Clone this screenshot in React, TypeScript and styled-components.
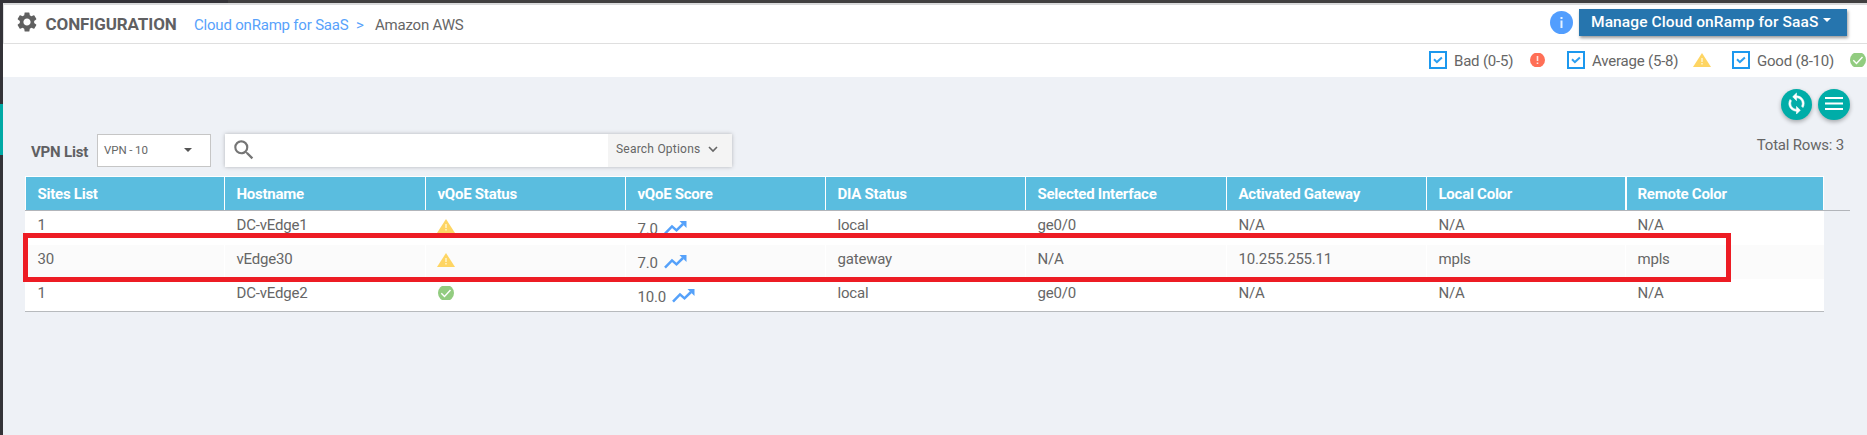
import React from 'react';
import styled, { createGlobalStyle } from 'styled-components';
import { MdSettings, MdSearch } from 'react-icons/md';

const GlobalStyle = createGlobalStyle`
  * { box-sizing: border-box; }
  body {
    margin: 0;
    overflow: hidden;
    background: #eef1f6;
    color: #666;
    font-family: Roboto, "Liberation Sans", sans-serif;
    font-size: 15px;
    line-height: 18px;
    letter-spacing: -0.2px;
  }
  svg { display: block; flex: none; }
`;

const Shell = styled.div`
  display: grid;
  grid-template-columns: 3px 1fr;
  grid-template-rows: 3px 432px;
`;
const TopEdge = styled.div`
  grid-column: 1 / -1;
  background: linear-gradient(90deg, #343338 228px, #403f40 228px);
`;
const Rail = styled.div`
  background: #343338;
  padding-top: 101px;
`;
const RailActive = styled.div`
  height: 51px;
  background: #00a9a5;
`;
const Main = styled.main`
  min-width: 0;
`;

const Header = styled.header`
  height: 41px;
  display: flex;
  align-items: flex-start;
  background: #fff;
  border-top: 2px solid #d9dadb;
  border-left: 1px solid #e0e1e2;
  border-bottom: 1px solid #dfdfdf;
  padding: 4px 20px 0 11px;
`;
const GearIcon = styled(MdSettings)`
  margin-top: 1px;
  color: #606060;
`;
const Title = styled.h1`
  margin: 6px 0 0 6.5px;
  width: 148.5px;
  font-size: 17px;
  line-height: 18px;
  font-weight: 700;
  letter-spacing: -0.1px;
  color: #5f6062;
`;
const Crumb = styled.span<{ $link?: boolean; $width?: number }>`
  margin-top: 7px;
  width: ${p => (p.$width ? `${p.$width}px` : 'auto')};
  white-space: nowrap;
  color: ${p => (p.$link ? '#58a2fb' : '#666')};
`;
const HeaderActions = styled.div`
  display: flex;
  margin-left: auto;
  gap: 6px;
`;
const InfoIcon = styled.svg`
  margin-top: 2px;
`;
const ManageButton = styled.button`
  width: 268px;
  height: 27px;
  display: flex;
  align-items: flex-start;
  gap: 5px;
  padding: 4px 0 0 12px;
  border: 0;
  background: #2675ae;
  color: #fff;
  font: 500 15.5px/18px Roboto, sans-serif;
  letter-spacing: 0.1px;
  white-space: nowrap;
  box-shadow: 1px 2px 3px rgba(0, 0, 0, 0.4);
`;
const Caret = styled.i<{ $color: string }>`
  width: 0;
  height: 0;
  border: 4.5px solid transparent;
  border-top: 4px solid ${p => p.$color};
  border-bottom: 0;
`;
const ManageCaret = styled(Caret)`
  margin-top: 5px;
`;

const Legend = styled.div`
  height: 33px;
  display: flex;
  justify-content: flex-end;
  align-items: flex-start;
  padding: 7px 1px 0 0;
  background: #fff;
`;
const LegendItem = styled.label<{ $width: number }>`
  width: ${p => p.$width}px;
  display: flex;
`;
const LegendText = styled.span<{ $width: number }>`
  width: ${p => p.$width}px;
  margin: 1px 0 0 7px;
  white-space: nowrap;
`;
const Check = styled.span`
  width: 18px;
  height: 18px;
  flex: none;
  border: 2px solid #1c98ee;
  background: #fff;
`;
const LegendIcon = styled.span`
  margin-top: 2px;
`;

const Actions = styled.div`
  display: flex;
  justify-content: flex-end;
  gap: 6px;
  padding: 12px 17px 0 0;
`;
const RoundButton = styled.button<{ $size: number }>`
  width: ${p => p.$size}px;
  height: 31px;
  display: flex;
  align-items: center;
  justify-content: center;
  padding: 0 0 2px;
  border: 0;
  border-radius: 50%;
  color: #fff;
  background: #00ada8;
  box-shadow: 0 2px 4px rgba(0, 0, 0, 0.3);
`;

const Toolbar = styled.div`
  height: 42px;
  margin-top: 14px;
  display: flex;
  align-items: flex-start;
  padding: 0 23px 0 28px;
`;
const VpnLabel = styled.b`
  width: 66px;
  margin-top: 9px;
  white-space: nowrap;
  color: #5f6062;
`;
const Select = styled.div`
  width: 114px;
  height: 33px;
  display: flex;
  justify-content: space-between;
  padding: 6px 18px 0 6px;
  border: 1px solid #c6c6c6;
  background: #fff;
  font-size: 11.5px;
  letter-spacing: -0.1px;
`;
const SelectCaret = styled(Caret)`
  margin-top: 7px;
`;
const SearchBox = styled.div`
  width: 507px;
  height: 33px;
  margin-left: 14px;
  display: flex;
  justify-content: space-between;
  background: #fff;
  box-shadow: 0 0 4px rgba(0, 0, 0, 0.25);
`;
const SearchIcon = styled(MdSearch)`
  margin: 3px 0 0 6px;
  color: #757575;
`;
const SearchOptions = styled.div`
  width: 124px;
  display: flex;
  padding: 6px 0 0 8px;
  gap: 8px;
  background: #f4f4f4;
  font-size: 12px;
  letter-spacing: 0.22px;
`;
const Chevron = styled.svg`
  margin-top: 6px;
`;
const Total = styled.span`
  margin-left: auto;
  margin-top: 2px;
`;

const TableArea = styled.section`
  position: relative;
  width: 1825px;
  margin-left: 22px;
`;
const columns = '199px 201px 200px 200px 200px 201px 200px 199px 199px';
const HeadRow = styled.div`
  display: grid;
  grid-template-columns: ${columns};
  height: 35px;
  border-bottom: 1px solid #b2b5ba;
`;
const HeadCell = styled.div`
  border: 1px solid #fff;
  border-width: 1px 0 0 1px;
  padding: 8px 0 0 11.5px;
  background: #5abddf;
  color: #fff;
  font-weight: 700;
  letter-spacing: -0.25px;
  white-space: nowrap;

  &:last-child {
    border-left-width: 2px;
    border-right-width: 1px;
    padding-left: 10.5px;
  }
`;
const Row = styled.div<{ $alt?: boolean; $last?: boolean }>`
  display: grid;
  grid-template-columns: ${columns};
  width: 1799px;
  height: ${p => (p.$last ? 33 : 34)}px;
  border-bottom: ${p => (p.$last ? '1px solid #b7babd' : '0')};
  background: ${p => (p.$alt ? '#fbfbfb' : '#fff')};
`;
const Cell = styled.div`
  border-left: 1px solid #fff;
  padding: 5px 0 0 11.5px;
  white-space: nowrap;
`;
const StatusCell = styled(Cell)<{ $good: boolean }>`
  padding: ${p => (p.$good ? '7px 0 0 12px' : '8px 0 0 11px')};
`;
const ScoreCell = styled(Cell)`
  display: flex;
  padding-top: 9px;
  gap: 6px;
`;
const Trend = styled.svg`
  margin-top: 1px;
`;
const Highlight = styled.div`
  position: absolute;
  left: -2px;
  top: 57px;
  width: 1708px;
  height: 49px;
  border: 5px solid #ed1c24;
`;

const WarningIcon = () => (
  <svg width="18" height="14" viewBox="0 0 18 14">
    <path d="M9 0L18 14H0Z" fill="#fed563" />
    <path d="M9 5v4M9 10v1.5" stroke="#fff3ca" strokeWidth="1.5" />
  </svg>
);
const GoodIcon = () => (
  <svg width="16" height="14" viewBox="0 0 16 14">
    <circle cx="8" cy="7" r="8" fill="#92cc80" />
    <path d="M3.3 7.2l3.2 3.2 6-6.4" fill="none" stroke="#fff" strokeWidth="1.4" />
  </svg>
);
const BadIcon = () => (
  <svg width="15" height="14" viewBox="0 0 15 14">
    <circle cx="7.5" cy="7" r="7.5" fill="#ff6f56" />
    <path d="M7.5 3v5M7.5 9.5V11" stroke="#ffe4df" strokeWidth="1.6" />
  </svg>
);
const CheckBox = () => (
  <Check>
    <svg width="14" height="14" viewBox="0 0 14 14">
      <path d="M3 6.2l2.9 2.9 5-4.6" fill="none" stroke="#2d9ff0" strokeWidth="2" />
    </svg>
  </Check>
);
const SyncIcon = () => (
  <svg width="23" height="23" viewBox="0 0 24 24" fill="#fff" stroke="#fff" strokeWidth="0.6">
    <path d="M12 4V1L8 5l4 4V6c3.31 0 6 2.69 6 6 0 1.01-.25 1.97-.7 2.8l1.46 1.46C19.54 15.03 20 13.57 20 12c0-4.42-3.58-8-8-8z" />
    <path d="M12 18c-3.31 0-6-2.69-6-6 0-1.01.25-1.97.7-2.8L5.24 7.74C4.46 8.97 4 10.43 4 12c0 4.42 3.58 8 8 8v3l4-4-4-4v3z" />
  </svg>
);
const TrendIcon = () => (
  <Trend width="23" height="14" viewBox="0 0 23 14">
    <path d="M1 12.6L8 5.4L12.5 9.4L19 3" fill="none" stroke="#55a1fa" strokeWidth="2.5" />
    <path d="M15.5 0H22.5V7Z" fill="#55a1fa" />
  </Trend>
);

const headings = ['Sites List', 'Hostname', 'vQoE Status', 'vQoE Score', 'DIA Status', 'Selected Interface', 'Activated Gateway', 'Local Color', 'Remote Color'];
const rows = [
  { site: '1', host: 'DC-vEdge1', good: false, score: '7.0', rest: ['local', 'ge0/0', 'N/A', 'N/A', 'N/A'] },
  { site: '30', host: 'vEdge30', good: false, score: '7.0', rest: ['gateway', 'N/A', '10.255.255.11', 'mpls', 'mpls'] },
  { site: '1', host: 'DC-vEdge2', good: true, score: '10.0', rest: ['local', 'ge0/0', 'N/A', 'N/A', 'N/A'] },
];

export default function App() {
  return (
    <>
      <GlobalStyle />
      <Shell>
        <TopEdge />
        <Rail><RailActive /></Rail>
        <Main>
          <Header>
            <GearIcon size={24} />
            <Title>CONFIGURATION</Title>
            <Crumb $link $width={162}>Cloud onRamp for SaaS</Crumb>
            <Crumb $link $width={19}>&gt;</Crumb>
            <Crumb>Amazon AWS</Crumb>
            <HeaderActions>
              <InfoIcon width="23" height="23" viewBox="0 0 23 23">
                <circle cx="11.5" cy="11.5" r="11.5" fill="#529efe" />
                <path d="M11.5 6v2M11.5 9.5V17" stroke="#e6f1ff" strokeWidth="2" />
              </InfoIcon>
              <ManageButton>Manage Cloud onRamp for SaaS<ManageCaret $color="#fff" /></ManageButton>
            </HeaderActions>
          </Header>
          <Legend>
            <LegendItem $width={138}><CheckBox /><LegendText $width={76}>Bad (0-5)</LegendText><LegendIcon><BadIcon /></LegendIcon></LegendItem>
            <LegendItem $width={165}><CheckBox /><LegendText $width={101}>Average (5-8)</LegendText><LegendIcon><WarningIcon /></LegendIcon></LegendItem>
            <LegendItem $width={134}><CheckBox /><LegendText $width={93}>Good (8-10)</LegendText><LegendIcon><GoodIcon /></LegendIcon></LegendItem>
          </Legend>
          <Actions>
            <RoundButton $size={31} aria-label="Refresh"><SyncIcon /></RoundButton>
            <RoundButton $size={32} aria-label="Menu">
              <svg width="18" height="13" viewBox="0 0 18 13"><path d="M0 1h18M0 6.5h18M0 12h18" stroke="#fff" strokeWidth="2" /></svg>
            </RoundButton>
          </Actions>
          <Toolbar>
            <VpnLabel>VPN List</VpnLabel>
            <Select>VPN - 10<SelectCaret $color="#555" /></Select>
            <SearchBox>
              <SearchIcon size={26} />
              <SearchOptions>Search Options
                <Chevron width="10" height="7" viewBox="0 0 10 7"><path d="M1 1l4 4 4-4" fill="none" stroke="#666" strokeWidth="1.6" /></Chevron>
              </SearchOptions>
            </SearchBox>
            <Total>Total Rows: 3</Total>
          </Toolbar>
          <TableArea>
            <HeadRow>{headings.map(h => <HeadCell key={h}>{h}</HeadCell>)}</HeadRow>
            {rows.map((r, i) => (
              <Row key={r.host} $alt={i === 1} $last={i === 2}>
                <Cell>{r.site}</Cell>
                <Cell>{r.host}</Cell>
                <StatusCell $good={r.good}>{r.good ? <GoodIcon /> : <WarningIcon />}</StatusCell>
                <ScoreCell>{r.score}<TrendIcon /></ScoreCell>
                {r.rest.map((value, n) => <Cell key={n}>{value}</Cell>)}
              </Row>
            ))}
            <Highlight />
          </TableArea>
        </Main>
      </Shell>
    </>
  );
}
